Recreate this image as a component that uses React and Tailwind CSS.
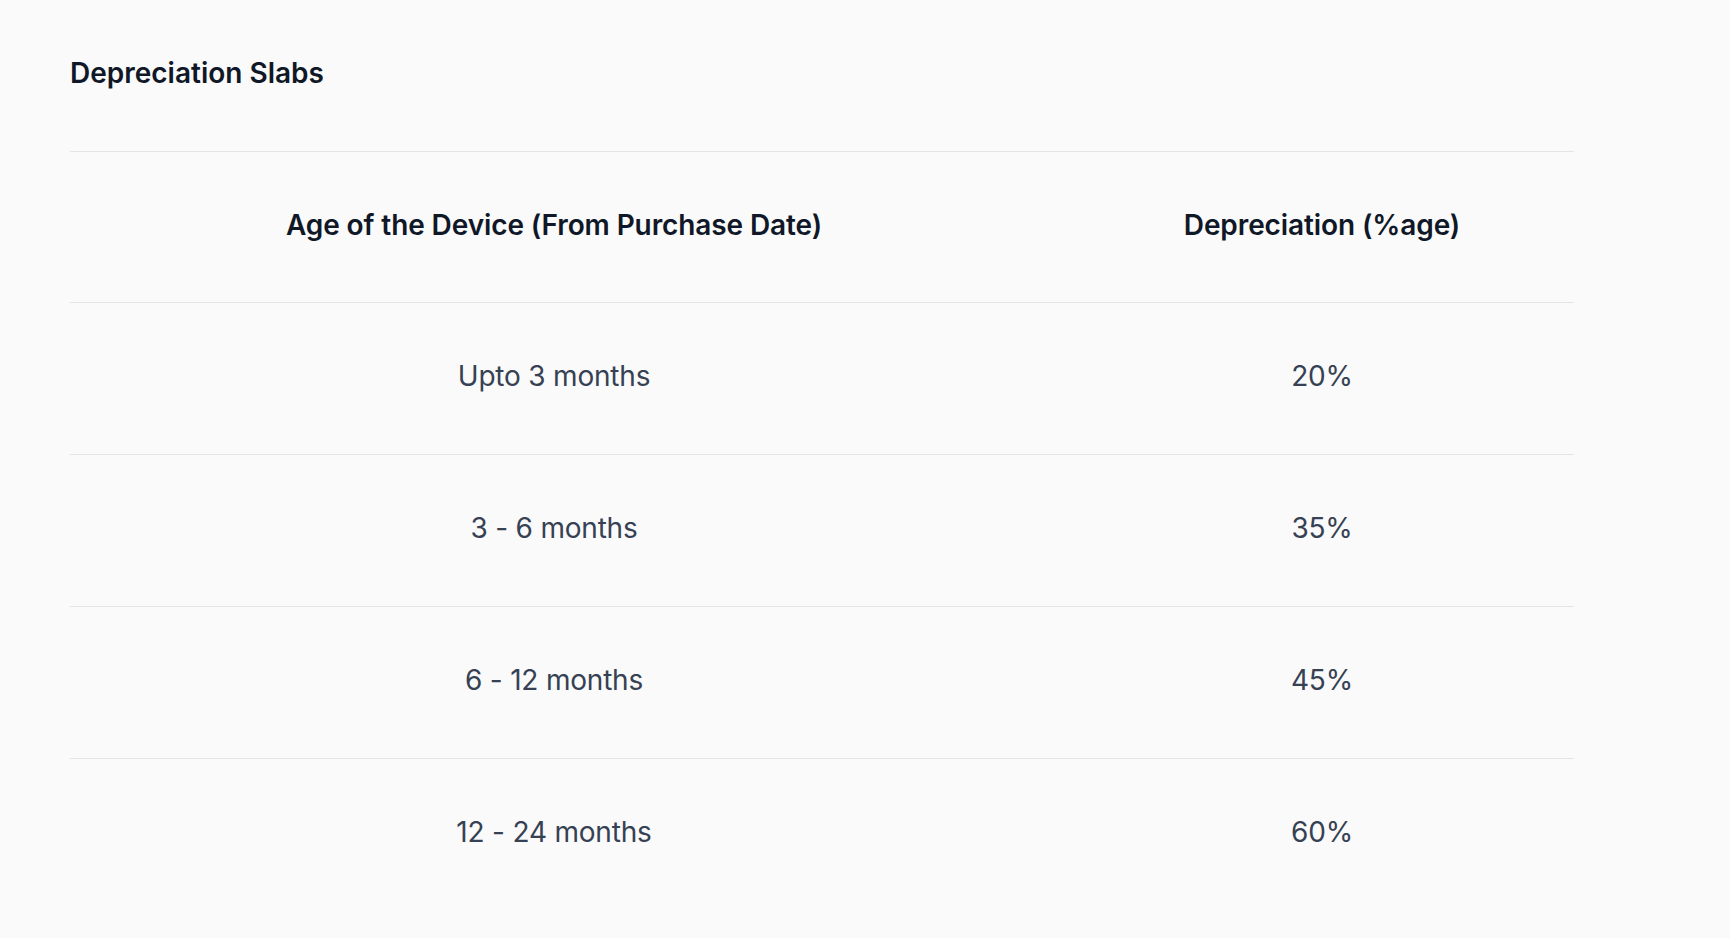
const rows = [
  ["Upto 3 months", "20%"],
  ["3 - 6 months", "35%"],
  ["6 - 12 months", "45%"],
  ["12 - 24 months", "60%"],
];

export default function App() {
  return (
    <div
      className="min-h-screen bg-[#fafafa] pl-[70px] pt-[57px]"
      style={{ fontFamily: "Inter, 'Noto Sans', sans-serif" }}
    >
      <h2 className="text-[28px] leading-8 font-semibold text-gray-900">Depreciation Slabs</h2>

      <div className="mt-[62px] w-[1504px] border-t border-zinc-200">
        <div className="grid grid-cols-[968px_1fr] border-b border-zinc-200 text-[28px] leading-8 font-semibold tracking-[-0.1px] text-gray-900">
          <div className="pt-[57px] pb-[61px] text-center">Age of the Device (From Purchase Date)</div>
          <div className="pt-[57px] pb-[61px] pl-[32px] text-center">Depreciation (%age)</div>
        </div>
        {rows.map(([age, pct], i) => (
          <div
            key={age}
            className={
              "grid grid-cols-[968px_1fr] text-[28px] leading-[33px] tracking-[-0.2px] text-gray-700 " +
              (i < rows.length - 1 ? "border-b border-zinc-200" : "")
            }
          >
            <div className="pt-[57px] pb-[61px] text-center">{age}</div>
            <div className="pt-[57px] pb-[61px] pl-[32px] text-center">{pct}</div>
          </div>
        ))}
      </div>
    </div>
  );
}
